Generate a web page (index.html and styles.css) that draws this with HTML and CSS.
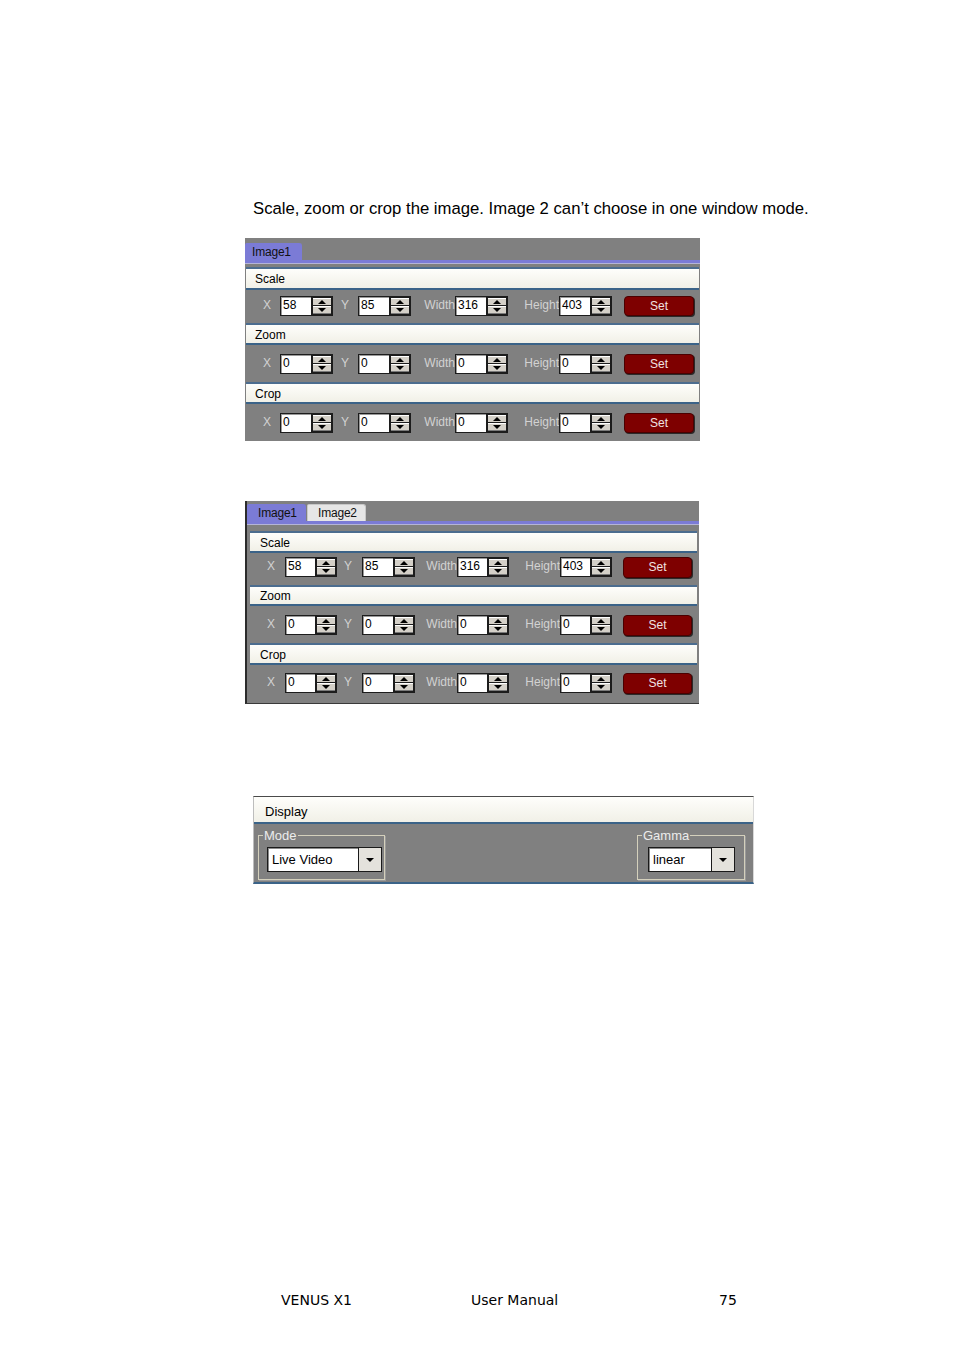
FILE: index.html
```html
<!DOCTYPE html>
<html>
<head>
<meta charset="utf-8">
<title>Scale, zoom or crop</title>
<link rel="stylesheet" href="styles.css">
</head>
<body>
<main class="page">
  <p class="intro">Scale, zoom or crop the image. Image 2 can’t choose in one window mode.</p>

  <section class="panel p1">
    <div class="tabs"><span class="tab active">Image1</span></div>
    <div class="tabline"></div>
    <div class="sec s1">Scale</div>
    <div class="row ra">
      <span class="lbl lx">X</span><span class="spin sa"><span class="val">58</span><span class="btns"><i class="up"></i><i class="dn"></i></span></span>
      <span class="lbl ly">Y</span><span class="spin sb"><span class="val">85</span><span class="btns"><i class="up"></i><i class="dn"></i></span></span>
      <span class="lbl lw">Width</span><span class="spin sc"><span class="val">316</span><span class="btns"><i class="up"></i><i class="dn"></i></span></span>
      <span class="lbl lh">Height</span><span class="spin sd"><span class="val">403</span><span class="btns"><i class="up"></i><i class="dn"></i></span></span>
      <span class="set">Set</span>
    </div>
    <div class="sec s2">Zoom</div>
    <div class="row rb">
      <span class="lbl lx">X</span><span class="spin sa"><span class="val">0</span><span class="btns"><i class="up"></i><i class="dn"></i></span></span>
      <span class="lbl ly">Y</span><span class="spin sb"><span class="val">0</span><span class="btns"><i class="up"></i><i class="dn"></i></span></span>
      <span class="lbl lw">Width</span><span class="spin sc"><span class="val">0</span><span class="btns"><i class="up"></i><i class="dn"></i></span></span>
      <span class="lbl lh">Height</span><span class="spin sd"><span class="val">0</span><span class="btns"><i class="up"></i><i class="dn"></i></span></span>
      <span class="set">Set</span>
    </div>
    <div class="sec s3">Crop</div>
    <div class="row rc">
      <span class="lbl lx">X</span><span class="spin sa"><span class="val">0</span><span class="btns"><i class="up"></i><i class="dn"></i></span></span>
      <span class="lbl ly">Y</span><span class="spin sb"><span class="val">0</span><span class="btns"><i class="up"></i><i class="dn"></i></span></span>
      <span class="lbl lw">Width</span><span class="spin sc"><span class="val">0</span><span class="btns"><i class="up"></i><i class="dn"></i></span></span>
      <span class="lbl lh">Height</span><span class="spin sd"><span class="val">0</span><span class="btns"><i class="up"></i><i class="dn"></i></span></span>
      <span class="set">Set</span>
    </div>
  </section>

  <section class="panel p2">
    <div class="tabs"><span class="tab active">Image1</span><span class="tab">Image2</span></div>
    <div class="tabline"></div>
    <div class="sec s1">Scale</div>
    <div class="row ra">
      <span class="lbl lx">X</span><span class="spin sa"><span class="val">58</span><span class="btns"><i class="up"></i><i class="dn"></i></span></span>
      <span class="lbl ly">Y</span><span class="spin sb"><span class="val">85</span><span class="btns"><i class="up"></i><i class="dn"></i></span></span>
      <span class="lbl lw">Width</span><span class="spin sc"><span class="val">316</span><span class="btns"><i class="up"></i><i class="dn"></i></span></span>
      <span class="lbl lh">Height</span><span class="spin sd"><span class="val">403</span><span class="btns"><i class="up"></i><i class="dn"></i></span></span>
      <span class="set">Set</span>
    </div>
    <div class="sec s2">Zoom</div>
    <div class="row rb">
      <span class="lbl lx">X</span><span class="spin sa"><span class="val">0</span><span class="btns"><i class="up"></i><i class="dn"></i></span></span>
      <span class="lbl ly">Y</span><span class="spin sb"><span class="val">0</span><span class="btns"><i class="up"></i><i class="dn"></i></span></span>
      <span class="lbl lw">Width</span><span class="spin sc"><span class="val">0</span><span class="btns"><i class="up"></i><i class="dn"></i></span></span>
      <span class="lbl lh">Height</span><span class="spin sd"><span class="val">0</span><span class="btns"><i class="up"></i><i class="dn"></i></span></span>
      <span class="set">Set</span>
    </div>
    <div class="sec s3">Crop</div>
    <div class="row rc">
      <span class="lbl lx">X</span><span class="spin sa"><span class="val">0</span><span class="btns"><i class="up"></i><i class="dn"></i></span></span>
      <span class="lbl ly">Y</span><span class="spin sb"><span class="val">0</span><span class="btns"><i class="up"></i><i class="dn"></i></span></span>
      <span class="lbl lw">Width</span><span class="spin sc"><span class="val">0</span><span class="btns"><i class="up"></i><i class="dn"></i></span></span>
      <span class="lbl lh">Height</span><span class="spin sd"><span class="val">0</span><span class="btns"><i class="up"></i><i class="dn"></i></span></span>
      <span class="set">Set</span>
    </div>
  </section>

  <section class="display">
    <div class="dhead">Display</div>
    <div class="dbody">
      <fieldset class="grp gmode">
        <legend>Mode</legend>
        <div class="combo cmode"><span class="ctext">Live Video</span><span class="carrow"></span></div>
      </fieldset>
      <fieldset class="grp ggamma">
        <legend>Gamma</legend>
        <div class="combo cgamma"><span class="ctext">linear</span><span class="carrow"></span></div>
      </fieldset>
    </div>
  </section>

  <footer class="foot">
    <span class="f1">VENUS X1</span>
    <span class="f2">User Manual</span>
    <span class="f3">75</span>
  </footer>
</main>
</body>
</html>
```

FILE: styles.css
```css
html, body {
  margin: 0;
  padding: 0;
  background: #ffffff;
}

.page {
  display: flex;
  flex-direction: column;
  align-items: flex-start;
  width: 954px;
  height: 1350px;
  font-family: "Liberation Sans", Arial, sans-serif;
}

.intro {
  margin: 199px 0 0 253px;
  font-size: 16.7px;
  line-height: 19px;
  color: #000;
}

/* ---------- panels ---------- */
.panel {
  background: #808080;
  font-size: 12px;
  box-sizing: border-box;
  display: flex;
  flex-direction: column;
}

.p1 {
  margin: 20px 0 0 245px;
  width: 455px;
  height: 203px;
}

.p2 {
  margin: 60px 0 0 245px;
  width: 454px;
  height: 203px;
  border-left: 2px solid #2c2c2c;
  border-bottom: 1px solid #3a3a3a;
}

.tabs {
  display: flex;
  align-items: flex-end;
  gap: 1px;
}
.p1 .tabs { height: 22px; }
.p2 .tabs { height: 20px; }

.tab {
  height: 17px;
  line-height: 17px;
  box-sizing: border-box;
  padding-left: 8px;
  color: #111;
  background: #e6e6e6;
  border-top-right-radius: 3px;
  border-top-left-radius: 2px;
  border: 1px solid #c8c8c8;
  border-bottom: none;
  letter-spacing: -0.2px;
}
.tab.active {
  background: #7b7bd6;
  border-color: #7b7bd6;
}
.p1 .tab { width: 57px; padding-left: 6px; }
.p2 .tab { width: 59px; padding-left: 10px; }

.tabline {
  height: 3px;
  background: #7b7bd6;
  border-bottom: 1px solid #b4b4d8;
}
.p1 .tabline { margin-bottom: 3px; }
.p2 .tabline { margin-bottom: 6px; }

.sec {
  box-sizing: border-box;
  border-top: 2px solid #4c6d8f;
  border-bottom: 2px solid #3b6388;
  background: linear-gradient(#fefefb, #f1f0e7);
  color: #000;
  padding-left: 9px;
  padding-top: 1px;
  display: flex;
  align-items: center;
}
.p1 .sec { margin: 0 1px; height: 23px; }
.p1 .s2, .p1 .s3 { height: 22px; }
.p2 .sec { margin: 0 2px 0 3px; height: 22px; padding-left: 10px; }
.p2 .s2 { height: 21px; }

.row {
  display: flex;
  align-items: flex-start;
  box-sizing: border-box;
}
.p1 .ra { height: 33px; padding-top: 6px; }
.p1 .rb { height: 37px; padding-top: 9px; }
.p1 .rc { height: 37px; padding-top: 9px; }
.p2 .ra { height: 32px; padding-top: 4px; }
.p2 .rb { height: 37px; padding-top: 9px; }
.p2 .rc { height: 38px; padding-top: 8px; }

.lbl {
  color: #d2d2d2;
  text-align: right;
  box-sizing: border-box;
  height: 20px;
  line-height: 18px;
}

.p1 .lx { width: 35px; padding-right: 9px; }
.p1 .ly { width: 25px; padding-right: 9px; }
.p1 .lw { width: 44px; }
.p1 .lh { width: 51px; }

.p2 .lx { width: 38px; padding-right: 10px; }
.p2 .ly { width: 25px; padding-right: 10px; }
.p2 .lw { width: 42px; }
.p2 .lh { width: 51px; }

.spin {
  display: flex;
  box-sizing: border-box;
  height: 20px;
  border: 1px solid #1c1c1c;
  background: #fff;
  box-shadow: inset 1px 1px 0 #9a9a9a;
}
.p1 .spin { width: 53px; }
.p2 .spin { width: 52px; }
.p2 .sb { width: 53px; }

.val {
  flex: 1;
  color: #000;
  padding-left: 2px;
  line-height: 17px;
}

.btns {
  width: 18px;
  display: flex;
  flex-direction: column;
  background: #d4d0c8;
  border-left: 1px solid #1c1c1c;
  margin: 1px 1px 1px 0;
  outline: 1px solid #1c1c1c;
}
.btns i {
  flex: 1;
  display: flex;
  align-items: center;
  justify-content: center;
  box-sizing: border-box;
  border-top: 1px solid #ffffff;
  border-bottom: 1px solid #7a7a7a;
}
.btns i + i {
  border-top: 1px solid #fff;
  box-shadow: 0 -1px 0 #1c1c1c;
}
.btns i::before {
  content: "";
  width: 0;
  height: 0;
  border-left: 4px solid transparent;
  border-right: 4px solid transparent;
}
.btns .up::before { border-bottom: 4px solid #000; }
.btns .dn::before { border-top: 4px solid #000; }

.set {
  box-sizing: border-box;
  height: 20px;
  line-height: 18px;
  text-align: center;
  color: #f0e2e2;
  background: #7e0000;
  border: 1px solid #4a0000;
  border-radius: 4px;
  box-shadow: 1px 1px 0 #2a2a2a;
}
.p1 .set { width: 70px; margin-left: 12px; }
.p2 .set { width: 69px; margin-left: 11px; height: 21px; }

/* ---------- display ---------- */
.display {
  margin: 92px 0 0 253px;
  width: 501px;
  box-sizing: border-box;
  background: #808080;
  border-top: 1px solid #4a4a4a;
  border-left: 1px solid #bdbdbd;
  border-right: 1px solid #d8d8d8;
  border-bottom: 2px solid #3b6388;
  font-size: 13px;
}

.dhead {
  height: 27px;
  box-sizing: border-box;
  background: linear-gradient(#fefefb, #f1f0e7);
  border-bottom: 2px solid #3b6388;
  color: #000;
  padding-left: 11px;
  padding-top: 3px;
  display: flex;
  align-items: center;
}

.dbody {
  display: flex;
  justify-content: space-between;
  padding: 4px 8px 2px 4px;
  height: 58px;
  box-sizing: border-box;
}

.grp {
  margin: 0;
  border: 1px solid #d4d0bc;
  box-shadow: 1px 1px 0 #9a9a9a;
  padding: 4px 2px 5px 8px;
  min-width: 0;
}
.grp legend {
  color: #ececec;
  padding: 0 1px;
  line-height: 15px;
}
.gmode { width: 127px; box-sizing: border-box; }
.gmode legend { margin-left: -4px; }
.ggamma { width: 108px; box-sizing: border-box; padding-left: 10px; }
.ggamma legend { margin-left: -6px; }

.combo {
  display: flex;
  height: 25px;
  box-sizing: border-box;
  border: 1px solid #1a1a1a;
  background: #fff;
  box-shadow: inset 1px 1px 0 #8a8a8a;
}
.cmode { width: 115px; }
.cgamma { width: 87px; }

.ctext {
  flex: 1;
  color: #000;
  padding-left: 4px;
  line-height: 24px;
}

.carrow {
  width: 22px;
  background: #e4e2dc;
  border-left: 1px solid #1a1a1a;
  display: flex;
  align-items: center;
  justify-content: center;
}
.carrow::before {
  content: "";
  width: 0;
  height: 0;
  border-left: 4px solid transparent;
  border-right: 4px solid transparent;
  border-top: 4px solid #000;
}

/* ---------- footer ---------- */
.foot {
  margin-top: 408px;
  display: flex;
  font-family: "DejaVu Sans", Verdana, sans-serif;
  font-size: 14px;
  line-height: 17px;
  color: #000;
}
.f1 { margin-left: 281px; width: 190px; }
.f2 { width: 248px; }
.f3 { }
```
